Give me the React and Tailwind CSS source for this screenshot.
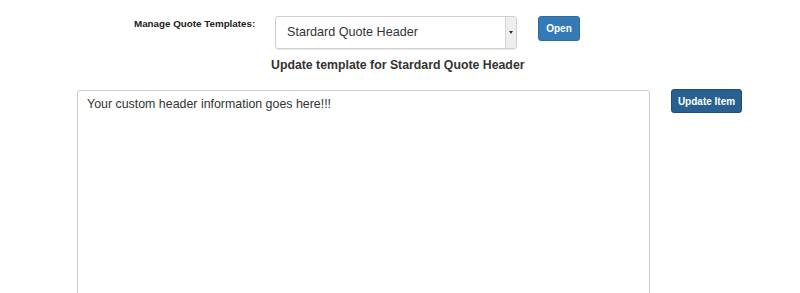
export default function App() {
  return (
    <div className="w-[800px] h-[293px] overflow-hidden bg-white text-[#333]" style={{ fontFamily: '"Liberation Sans", Arial, sans-serif' }}>
      <div className="flex items-start pt-[16px]">
        <div className="ml-[134px] w-[141px] pt-[1px] text-[9.8px] font-bold text-[#222] leading-[14px]">Manage Quote Templates:</div>
        <div className="flex flex-col items-center">
          <div className="flex items-start">
            <div className="flex w-[242px] h-[33px] border border-[#cfcfcf] rounded-[3px] shadow-[0_1px_1px_rgba(0,0,0,0.08)] overflow-hidden">
              <div className="flex-1 pl-[11px] flex items-center text-[12.6px] text-[#333]">Stardard Quote Header</div>
              <div className="w-[11px] border-l border-[#d5d5d5] bg-[#eeeeee] flex items-center justify-center">
                <div className="w-0 h-0 border-l-[2px] border-r-[2px] border-t-[3px] border-l-transparent border-r-transparent border-t-[#333]"></div>
              </div>
            </div>
            <button className="ml-[21px] w-[42px] h-[25px] rounded-[3px] bg-[#337ab7] text-white text-[10px] font-bold border border-[#2e6da4]">Open</button>
          </div>
        </div>
      </div>
      <div className="ml-[271px] mt-[8px] text-[12.3px] font-bold text-[#333] leading-[16px]">Update template for Stardard Quote Header</div>
      <div className="flex items-start mt-[17px]">
        <div className="ml-[77px] w-[573px] h-[300px] border border-[#cccccc] rounded-[3px] px-[9px] pt-[4px] text-[12.4px] text-[#333] leading-[18px]">Your custom header information goes here!!!</div>
        <button className="ml-[21px] w-[71px] h-[24px] -mt-[1px] rounded-[3px] bg-[#286090] border border-[#204d74] text-white text-[10px] font-bold">Update Item</button>
      </div>
    </div>
  );
}
